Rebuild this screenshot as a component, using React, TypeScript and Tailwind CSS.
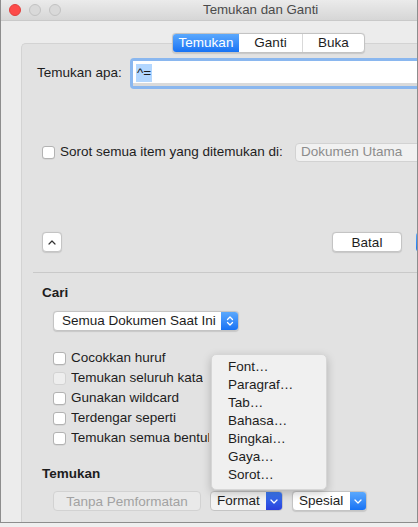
import React from "react";

const options = [
  { label: "Cocokkan huruf" },
  { label: "Temukan seluruh kata", disabled: true },
  { label: "Gunakan wildcard" },
  { label: "Terdengar seperti" },
  { label: "Temukan semua bentuk kata" },
];

const formatItems = ["Font…", "Paragraf…", "Tab…", "Bahasa…", "Bingkai…", "Gaya…", "Sorot…"];

function Check({ disabled = false }: { disabled?: boolean }) {
  return (
    <span
      className={
        disabled
          ? "w-[13px] h-[13px] shrink-0 rounded-[3px] border border-[#d3d3d3] bg-[#eeeeee]"
          : "w-[13px] h-[13px] shrink-0 rounded-[3px] border border-[#b3b3b3] bg-white shadow-[0_0.5px_0.5px_rgba(0,0,0,0.1)]"
      }
    />
  );
}

function ChevronDown() {
  return (
    <svg width="8" height="5" viewBox="0 0 8 5" fill="none">
      <path d="M1 1l3 3 3-3" stroke="white" strokeWidth="1.3" strokeLinecap="round" strokeLinejoin="round" />
    </svg>
  );
}

function Stepper() {
  return (
    <svg width="8" height="12" viewBox="0 0 8 12" fill="none">
      <path
        d="M1.5 4.5L4 2l2.5 2.5M1.5 7.5L4 10l2.5-2.5"
        stroke="white"
        strokeWidth="1.3"
        strokeLinecap="round"
        strokeLinejoin="round"
      />
    </svg>
  );
}

export default function App() {
  return (
    <div className="w-[418px] h-[527px] overflow-hidden bg-[#efefef] font-['Liberation_Sans',Arial,sans-serif] text-[13.5px] text-[#1d1d1d]">
      <div className="relative h-[523px] flex flex-col overflow-hidden border-l border-r border-b border-[#8d8d8d] bg-[#ececec]">
        {/* title bar */}
        <div className="h-[21px] shrink-0 flex items-center pl-[8px] gap-[8px] border-b border-[#c9c9c9] bg-gradient-to-b from-[#ebebeb] to-[#d6d6d6]">
          <span className="w-[12px] h-[12px] rounded-full bg-[#fd4b4a] border border-[#e0403d]" />
          <span className="w-[12px] h-[12px] rounded-full bg-[#d9d9d9] border border-[#c2c2c2]" />
          <span className="w-[12px] h-[12px] rounded-full bg-[#d9d9d9] border border-[#c2c2c2]" />
          <span className="ml-[134px] text-[13.3px] leading-none text-[#4b4b4b]">Temukan dan Ganti</span>
        </div>

        {/* tabs */}
        <div className="relative z-10 mt-[12px] -mb-[10px] pl-[171px] flex">
          <div className="flex h-[20px] rounded-[4px] border border-[#c3c3c3] bg-white overflow-hidden shadow-[0_0.5px_1px_rgba(0,0,0,0.12)]">
            <span className="w-[66px] flex items-center justify-center text-white bg-gradient-to-b from-[#5aa8fd] to-[#1672f4]">
              Temukan
            </span>
            <span className="w-[64px] flex items-center justify-center border-r border-[#d9d9d9]">Ganti</span>
            <span className="w-[61px] flex items-center justify-center">Buka</span>
          </div>
        </div>

        {/* panel */}
        <div className="ml-[20px] w-[520px] flex-1 flex flex-col rounded-tl-[5px] border-t border-l border-[#d3d3d3] bg-[#e2e2e2]">
          {/* find what */}
          <div className="mt-[14px] flex items-center">
            <span className="pl-[15px] w-[108px] shrink-0">Temukan apa:</span>
            <div className="h-[31px] w-[320px] rounded-[4px] border-[3px] border-[#8ab7ef]">
              <div className="h-full bg-white border-b-[3px] border-[#dadada] pt-[2px] pl-[3px]">
                <span className="inline-block bg-[#b3d7ff] leading-[18px] px-[1px]">^=</span>
              </div>
            </div>
          </div>

          {/* highlight row */}
          <div className="mt-[54px] h-[19px] flex items-center pl-[20px]">
            <Check />
            <span className="ml-[5px] w-[235px] shrink-0">Sorot semua item yang ditemukan di:</span>
            <span className="h-[19px] w-[150px] flex items-center pl-[5px] rounded-[4px] border border-[#d2d2d2] bg-[#f1f1f1] text-[#8c8c8c]">
              Dokumen Utama
            </span>
          </div>

          {/* buttons */}
          <div className="mt-[70px] h-[20px] flex items-center pl-[20px]">
            <button className="w-[20px] h-[20px] flex items-center justify-center rounded-[4px] border border-[#c4c4c4] bg-white shadow-[0_0.5px_1px_rgba(0,0,0,0.12)]">
              <svg width="8" height="5" viewBox="0 0 8 5" fill="none">
                <path d="M1 4l3-3 3 3" stroke="#333" strokeWidth="1.2" strokeLinecap="round" strokeLinejoin="round" />
              </svg>
            </button>
            <button className="ml-[270px] w-[70px] h-[20px] rounded-[4px] border border-[#c4c4c4] bg-white shadow-[0_0.5px_1px_rgba(0,0,0,0.12)]">
              Batal
            </button>
            <button className="ml-[14px] w-[70px] h-[20px] rounded-[4px] bg-gradient-to-b from-[#5aa8fd] to-[#1672f4]" />
          </div>

          <div className="mt-[20px] ml-[11px] h-px bg-[#c9c9c9]" />

          {/* search */}
          <div className="mt-[12px] pl-[20px] font-bold leading-[16px]">Cari</div>
          <div className="mt-[10px] ml-[31px] w-[186px] h-[20px] flex rounded-[4px] border border-[#c4c4c4] bg-white overflow-hidden shadow-[0_0.5px_1px_rgba(0,0,0,0.12)]">
            <span className="flex-1 flex items-center pl-[8px]">Semua Dokumen Saat Ini</span>
            <span className="w-[17px] flex items-center justify-center bg-gradient-to-b from-[#5aa8fd] to-[#1672f4]">
              <Stepper />
            </span>
          </div>

          <div className="mt-[17px] flex flex-col pl-[31px]">
            {options.map((o) => (
              <div key={o.label} className="h-[20px] flex items-center">
                <Check disabled={o.disabled} />
                {/* the open menu hides the rest of the label */}
                <span className="ml-[5px] max-w-[138px] overflow-hidden whitespace-nowrap">{o.label}</span>
              </div>
            ))}
          </div>

          {/* find format */}
          <div className="mt-[18px] pl-[20px] font-bold leading-[16px]">Temukan</div>
          <div className="mt-[9px] h-[20px] flex pl-[31px]">
            <button className="w-[148px] h-[20px] rounded-[4px] border border-[#d2d2d2] bg-[#e9e9e9] text-[#a2a2a2]">
              Tanpa Pemformatan
            </button>
            <div className="ml-[9px] w-[73px] h-[20px] flex rounded-[4px] border border-[#c4c4c4] bg-[#f3f3f3] overflow-hidden">
              <span className="flex-1 flex items-center pl-[6px]">Format</span>
              <span className="w-[16px] flex items-center justify-center bg-gradient-to-b from-[#3c79f0] to-[#2b3fdc]">
                <ChevronDown />
              </span>
            </div>
            <div className="ml-[9px] w-[75px] h-[20px] flex rounded-[4px] border border-[#c4c4c4] bg-white overflow-hidden shadow-[0_0.5px_1px_rgba(0,0,0,0.12)]">
              <span className="flex-1 flex items-center pl-[6px]">Spesial</span>
              <span className="w-[16px] flex items-center justify-center bg-gradient-to-b from-[#5aa8fd] to-[#1672f4]">
                <ChevronDown />
              </span>
            </div>
          </div>
        </div>

        {/* format menu (open) */}
        <div className="absolute left-[210px] top-[354px] w-[116px] pt-[3px] pb-[5px] rounded-[5px] border border-[#d6d6d6] bg-[#f0f0f0] shadow-[0_3px_10px_rgba(0,0,0,0.22)]">
          {formatItems.map((item) => (
            <div key={item} className="h-[18px] flex items-center pl-[16px]">
              {item}
            </div>
          ))}
        </div>
      </div>
    </div>
  );
}
